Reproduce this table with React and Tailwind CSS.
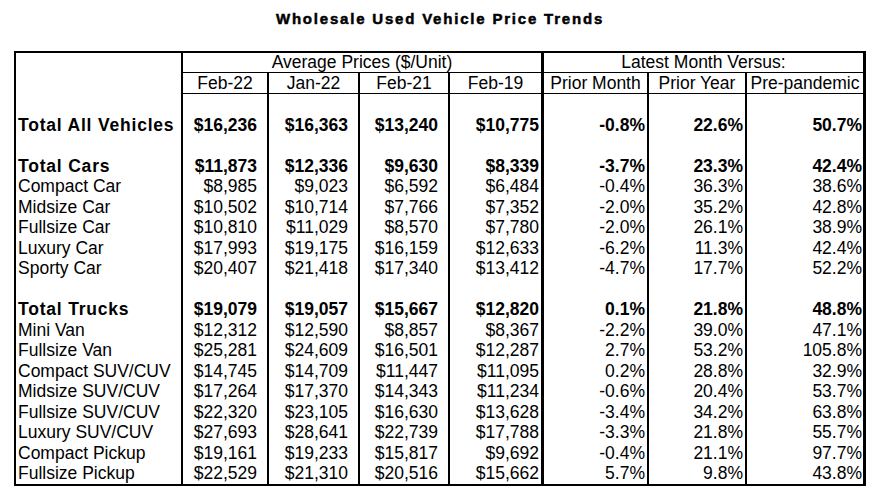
const COLS = ['Feb-22', 'Jan-22', 'Feb-21', 'Feb-19', 'Prior Month', 'Prior Year', 'Pre-pandemic'];

const ROWS = [
  null,
  { label: 'Total All Vehicles', bold: true, v: ['$16,236', '$16,363', '$13,240', '$10,775', '-0.8%', '22.6%', '50.7%'] },
  null,
  { label: 'Total Cars', bold: true, v: ['$11,873', '$12,336', '$9,630', '$8,339', '-3.7%', '23.3%', '42.4%'] },
  { label: 'Compact Car', v: ['$8,985', '$9,023', '$6,592', '$6,484', '-0.4%', '36.3%', '38.6%'] },
  { label: 'Midsize Car', v: ['$10,502', '$10,714', '$7,766', '$7,352', '-2.0%', '35.2%', '42.8%'] },
  { label: 'Fullsize Car', v: ['$10,810', '$11,029', '$8,570', '$7,780', '-2.0%', '26.1%', '38.9%'] },
  { label: 'Luxury Car', v: ['$17,993', '$19,175', '$16,159', '$12,633', '-6.2%', '11.3%', '42.4%'] },
  { label: 'Sporty Car', v: ['$20,407', '$21,418', '$17,340', '$13,412', '-4.7%', '17.7%', '52.2%'] },
  null,
  { label: 'Total Trucks', bold: true, v: ['$19,079', '$19,057', '$15,667', '$12,820', '0.1%', '21.8%', '48.8%'] },
  { label: 'Mini Van', v: ['$12,312', '$12,590', '$8,857', '$8,367', '-2.2%', '39.0%', '47.1%'] },
  { label: 'Fullsize Van', v: ['$25,281', '$24,609', '$16,501', '$12,287', '2.7%', '53.2%', '105.8%'] },
  { label: 'Compact SUV/CUV', v: ['$14,745', '$14,709', '$11,447', '$11,095', '0.2%', '28.8%', '32.9%'] },
  { label: 'Midsize SUV/CUV', v: ['$17,264', '$17,370', '$14,343', '$11,234', '-0.6%', '20.4%', '53.7%'] },
  { label: 'Fullsize SUV/CUV', v: ['$22,320', '$23,105', '$16,630', '$13,628', '-3.4%', '34.2%', '63.8%'] },
  { label: 'Luxury SUV/CUV', v: ['$27,693', '$28,641', '$22,739', '$17,788', '-3.3%', '21.8%', '55.7%'] },
  { label: 'Compact Pickup', v: ['$19,161', '$19,233', '$15,817', '$9,692', '-0.4%', '21.1%', '97.7%'] },
  { label: 'Fullsize Pickup', v: ['$22,529', '$21,310', '$20,516', '$15,662', '5.7%', '9.8%', '43.8%'] },
];

// right border + right padding per value column
const CELL = [
  'border-r-2 pr-[10px]',
  'border-r-2 pr-[10px]',
  'border-r-2 pr-[10px]',
  'border-r-[3px] pr-[2px]',
  'border-r-2 pr-[2px]',
  'border-r-2 pr-[2px]',
  'pr-[1px]',
];

const HEAD = ['border-r-2', 'border-r-2', 'border-r-2', 'border-r-[3px]', 'border-r-2', 'border-r-2', ''];

export default function App() {
  return (
    <div className="w-[880px] h-[495px] bg-white overflow-hidden text-black font-['Liberation_Sans',Arial,sans-serif]">
      {/* Title */}
      <div className="h-[51px] pt-[9px] text-center text-[15px] leading-[20px] font-bold tracking-[1.8px] [-webkit-text-stroke:0.5px_black]">
        Wholesale Used Vehicle Price Trends
      </div>

      {/* Table */}
      <div className="ml-[14px] w-[852px] border-t-2 border-l-2 border-b-2 border-r-[3px] border-black">
        <div className="grid grid-cols-[167px_86px_91px_90px_94px_105px_98px_116px] text-[17.5px] border-black">
          {/* header */}
          <div className="row-span-2 border-r-2 border-black" />
          <div className="col-span-4 h-[20px] leading-[19px] text-center border-b border-r-[3px] border-black">
            Average Prices ($/Unit)
          </div>
          <div className="col-span-3 h-[20px] leading-[19px] text-center border-b border-black">
            Latest Month Versus:
          </div>
          {COLS.map((c, i) => (
            <div key={c} className={`h-[21px] leading-[20px] text-center whitespace-nowrap border-b border-black ${HEAD[i]}`}>
              {c}
            </div>
          ))}

          {/* body */}
          {ROWS.map((r, ri) => (
            <div key={ri} className="contents">
              <div
                className={`h-[20.5px] leading-[20.5px] pl-[2px] whitespace-nowrap border-r-2 border-black ${
                  r && r.bold ? 'font-bold tracking-[0.8px]' : ''
                }`}
              >
                {r ? r.label : ''}
              </div>
              {CELL.map((cls, ci) => (
                <div
                  key={ci}
                  className={`h-[20.5px] leading-[20.5px] text-right whitespace-nowrap border-black ${cls} ${
                    r && r.bold ? 'font-bold' : ''
                  }`}
                >
                  {r ? r.v[ci] : ''}
                </div>
              ))}
            </div>
          ))}
        </div>
      </div>
    </div>
  );
}
